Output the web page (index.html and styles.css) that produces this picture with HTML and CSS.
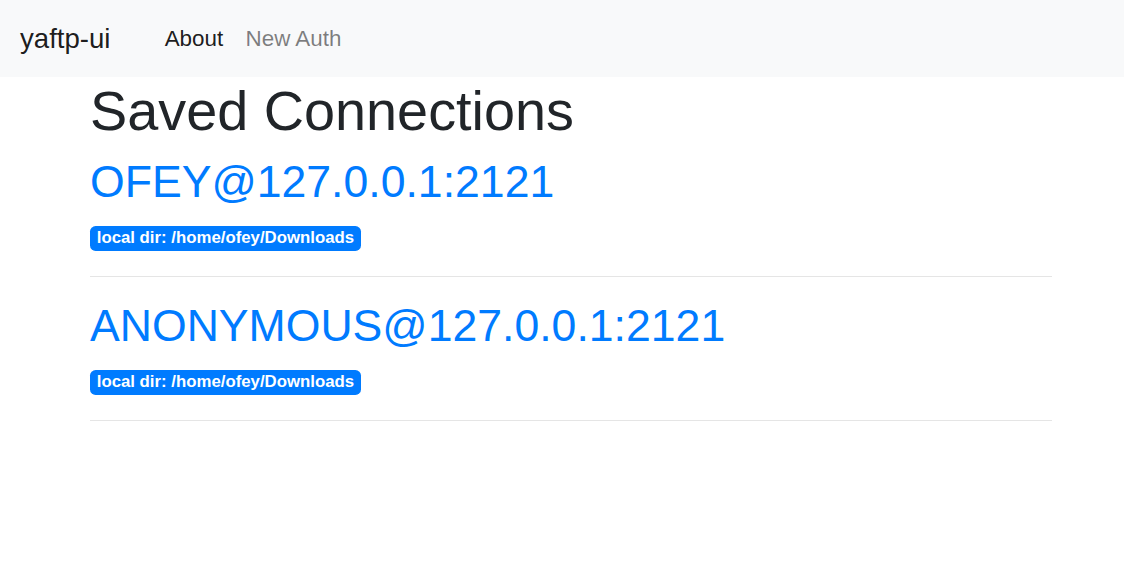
FILE: index.html
```html
<!DOCTYPE html>
<html>
<head>
<meta charset="utf-8">
<link rel="stylesheet" href="styles.css">
</head>
<body>
<nav class="navbar">
  <a class="brand" href="#">yaftp-ui</a>
  <ul class="nav">
    <li><a class="nav-link active" href="#">About</a></li>
    <li><a class="nav-link" href="#">New Auth</a></li>
  </ul>
</nav>
<main class="container">
  <h1 class="title">Saved Connections</h1>
  <section class="conn">
    <h2 class="conn-name"><a href="#">OFEY@127.0.0.1:2121</a></h2>
    <div class="meta"><span class="badge">local dir: /home/ofey/Downloads</span></div>
    <hr class="divider">
  </section>
  <section class="conn">
    <h2 class="conn-name"><a href="#">ANONYMOUS@127.0.0.1:2121</a></h2>
    <div class="meta"><span class="badge">local dir: /home/ofey/Downloads</span></div>
    <hr class="divider">
  </section>
</main>
</body>
</html>
```
FILE: styles.css
```css
* { box-sizing: border-box; }
html, body { margin: 0; padding: 0; }
body {
  font-family: "Liberation Sans", Arial, sans-serif;
  color: #212529;
  background: #fff;
}
.navbar {
  height: 77px;
  background: #f8f9fa;
  display: flex;
  align-items: center;
  padding: 0 20px;
}
.brand {
  font-size: 27.6px;
  line-height: 1.5;
  color: rgba(0,0,0,.9);
  text-decoration: none;
  margin-right: 43px;
}
.nav {
  list-style: none;
  margin: 0;
  padding: 0;
  display: flex;
}
.nav-link {
  display: block;
  font-size: 22.4px;
  line-height: 1.5;
  padding: 0 11.2px;
  color: rgba(0,0,0,.5);
  text-decoration: none;
}
.nav-link.active { color: rgba(0,0,0,.9); }
.container {
  margin-left: 90px;
  width: 962px;
}
.title {
  margin: 0 0 11.2px;
  font-size: 55.8px;
  font-weight: 500;
  line-height: 67.2px;
}
.conn-name {
  margin: 0 0 11.2px;
  font-size: 44.6px;
  font-weight: 500;
  line-height: 53.76px;
}
.conn-name a {
  color: #007bff;
  text-decoration: none;
}
.meta {
  padding-top: 5.6px;
  display: flex;
}
.badge {
  display: inline-block;
  background: #007bff;
  color: #fff;
  font-size: 16.8px;
  font-weight: 700;
  line-height: 1;
  padding: 4.2px 6.72px;
  border-radius: 5.6px;
  white-space: nowrap;
}
.divider {
  margin: 24.8px 0 22.4px;
  border: 0;
  border-top: 1px solid rgba(0,0,0,.1);
  height: 0;
}
```
